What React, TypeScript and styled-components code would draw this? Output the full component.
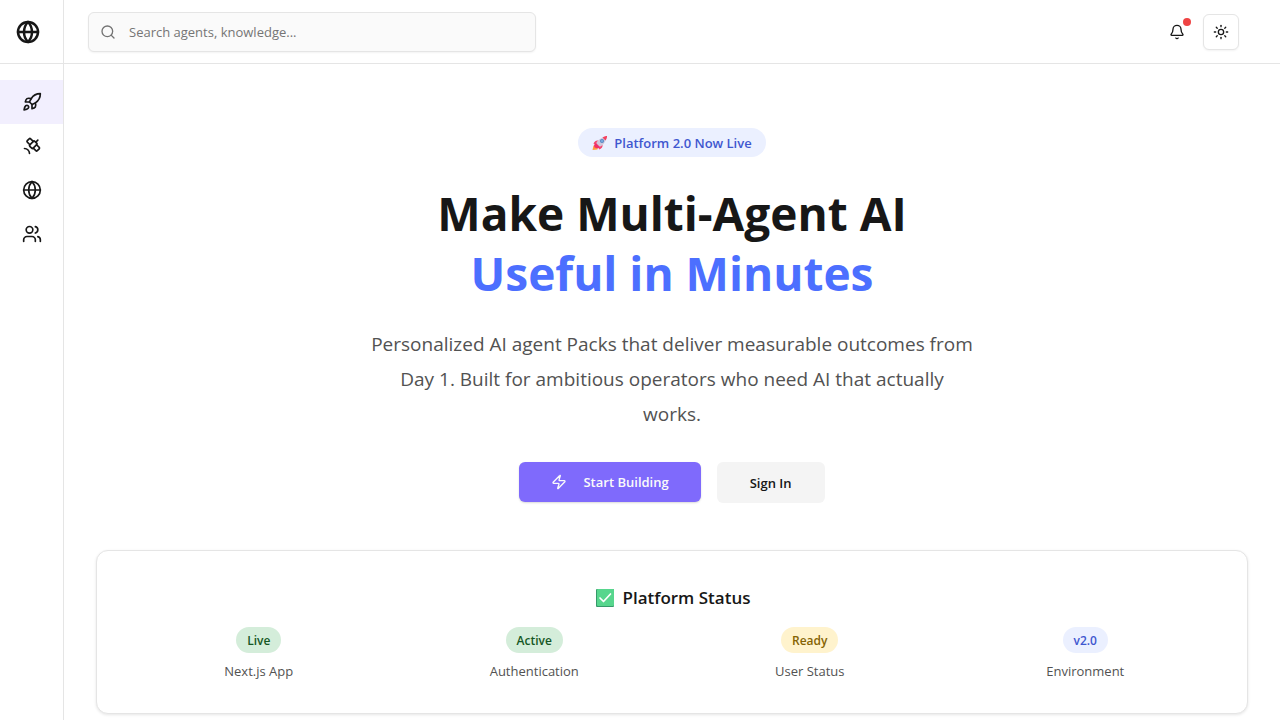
import React from 'react';
import styled, { createGlobalStyle } from 'styled-components';
import { Bell, Globe, Rocket, Satellite, Search, Sun, Users, Zap } from 'lucide-react';

const GlobalStyle = createGlobalStyle`
  *, *::before, *::after { box-sizing: border-box; }
  body {
    margin: 0;
    background: #ffffff;
    color: #171717;
    font-family: "Segoe UI", "Open Sans", "Noto Sans", sans-serif;
    font-size: 14px;
    line-height: 20px;
  }
  h1, h2, p, dl, dd, dt { margin: 0; }
`;

const Shell = styled.div`
  display: grid;
  grid-template-columns: 64px minmax(0, 1fr);
  min-height: 100vh;
`;

const Sidebar = styled.aside`
  border-right: 1px solid #e5e5e5;
`;

const Brand = styled.a`
  display: flex;
  align-items: center;
  height: 64px;
  padding-left: 16px;
  border-bottom: 1px solid #e5e5e5;
  color: inherit;
`;

const Nav = styled.nav`
  display: flex;
  flex-direction: column;
  padding-top: 16px;
`;

const NavLink = styled.a<{ $active?: boolean }>`
  display: flex;
  align-items: center;
  justify-content: center;
  height: 44px;
  color: inherit;
  background: ${(p) => (p.$active ? '#f2effe' : 'transparent')};
`;

const TopBar = styled.header`
  display: flex;
  align-items: center;
  justify-content: space-between;
  height: 64px;
  padding: 0 41px 0 24px;
  border-bottom: 1px solid #e5e5e5;
`;

const SearchBox = styled.label`
  display: flex;
  align-items: center;
  gap: 13px;
  flex: 0 1 448px;
  height: 40px;
  padding: 0 11px;
  border: 1px solid #e5e5e5;
  border-radius: 6px;
  background: #fafafa;
  box-shadow: 0 1px 2px rgba(0, 0, 0, 0.05);
  color: #737373;
`;

const SearchInput = styled.input`
  flex: 1;
  min-width: 0;
  padding: 0;
  border: 0;
  outline: 0;
  background: transparent;
  color: #171717;
  font: inherit;
  font-size: 13px;
  &::placeholder { color: #757575; opacity: 1; }
`;

const Actions = styled.div`
  display: flex;
  align-items: center;
  gap: 8px;
`;

const IconButton = styled.button<{ $outlined?: boolean }>`
  position: relative;
  display: flex;
  align-items: center;
  justify-content: center;
  width: 36px;
  height: 36px;
  padding: 0;
  border: 1px solid ${(p) => (p.$outlined ? '#e5e5e5' : 'transparent')};
  border-radius: 6px;
  background: #ffffff;
  box-shadow: ${(p) => (p.$outlined ? '0 1px 2px rgba(0, 0, 0, 0.05)' : 'none')};
  color: inherit;
`;

const Dot = styled.span`
  position: absolute;
  top: 3px;
  right: 3px;
  width: 8px;
  height: 8px;
  border-radius: 50%;
  background: #ef4444;
`;

const Main = styled.main`
  padding: 64px 32px 6px;
`;

const Hero = styled.section`
  display: flex;
  flex-direction: column;
  align-items: center;
  text-align: center;
`;

const Announcement = styled.div`
  display: flex;
  align-items: center;
  gap: 6px;
  height: 29px;
  padding: 0 14px;
  border-radius: 15px;
  background: #ebf0ff;
  color: #3f57cf;
  font-size: 13px;
  font-weight: 600;
`;

const Title = styled.h1`
  margin-top: 26px;
  font-size: 46px;
  font-weight: 700;
  line-height: 60px;
`;

const Accent = styled.span`
  display: block;
  color: #4c6fff;
`;

const Lead = styled.p`
  max-width: 604px;
  margin-top: 24px;
  color: #525252;
  font-size: 19px;
  line-height: 35px;
`;

const ButtonRow = styled.div`
  display: flex;
  gap: 16px;
  margin-top: 30px;
`;

const Button = styled.button<{ $primary?: boolean }>`
  display: flex;
  align-items: center;
  gap: 16px;
  height: ${(p) => (p.$primary ? '40px' : '41px')};
  padding: 0 ${(p) => (p.$primary ? '32px' : '33px')};
  border: 0;
  border-radius: 6px;
  background: ${(p) => (p.$primary ? '#7f6afc' : '#f4f4f4')};
  box-shadow: ${(p) => (p.$primary ? '0 1px 2px rgba(0, 0, 0, 0.15)' : 'none')};
  color: ${(p) => (p.$primary ? '#fafafa' : '#171717')};
  font: inherit;
  font-size: 13px;
  font-weight: 600;
`;

const StatusCard = styled.section`
  margin-top: 47px;
  padding: 33px 24px 32px;
  border: 1px solid #e5e5e5;
  border-radius: 12px;
  background: #ffffff;
  box-shadow: 0 1px 3px rgba(0, 0, 0, 0.1);
`;

const CardTitle = styled.h2`
  display: flex;
  align-items: center;
  justify-content: center;
  gap: 8px;
  padding-left: 3px;
  font-size: 17px;
  font-weight: 600;
  line-height: 28px;
`;

const StatusGrid = styled.dl`
  display: grid;
  grid-template-columns: repeat(4, minmax(0, 1fr));
  margin-top: 15px;
`;

const StatusItem = styled.div`
  display: flex;
  flex-direction: column-reverse;
  align-items: center;
  gap: 8px;
`;

const StatusLabel = styled.dt`
  color: #525252;
  font-size: 13px;
  line-height: 20px;
`;

const tones = {
  green: { background: '#d4edda', color: '#155724' },
  amber: { background: '#fff3cd', color: '#856404' },
  blue: { background: '#ebf0ff', color: '#3f57cf' },
};

const Pill = styled.dd<{ $tone: keyof typeof tones }>`
  padding: 4px 11px 2px;
  border-radius: 13px;
  background: ${(p) => tones[p.$tone].background};
  color: ${(p) => tones[p.$tone].color};
  font-size: 12px;
  font-weight: 600;
  line-height: 20px;
`;

const RocketEmoji = () => (
  <svg width="16" height="16" viewBox="0 0 32 32" aria-hidden="true">
    <path d="M3 21 L1 30 L11 29 L11 23 Z" fill="#ff9d3c" />
    <path d="M13 11 C8 10 4 13 3 18 L10 19 Z" fill="#f4486f" />
    <path d="M21 19 C22 24 19 28 14 29 L13 22 Z" fill="#f4486f" />
    <path d="M26 4 C18 5 11 10 8 17 L15 24 C22 21 27 14 28 6 Z" fill="#cfc9dc" />
    <path d="M8 16 L16 24 L12 27 L5 25 L4 20 Z" fill="#f02f68" />
    <path d="M21 5 C25 2 28 2 30 2 C30 4 30 7 27 11 Z" fill="#f4405f" />
    <circle cx="20" cy="12" r="4" fill="#5585c4" />
    <circle cx="20" cy="12" r="2" fill="#7fb3e6" />
  </svg>
);

const CheckEmoji = () => (
  <svg width="18" height="18" viewBox="0 0 18 18" aria-hidden="true">
    <rect width="18" height="18" rx="1" fill="#36996a" />
    <rect x="1" width="17" height="17" rx="1" fill="#57d68d" />
    <path d="M4 9 L7.5 12.5 L14.5 5" fill="none" stroke="#ffffff" strokeWidth="1.7" strokeLinecap="round" strokeLinejoin="round" />
  </svg>
);

const navItems = [
  { label: 'Launch', icon: Rocket },
  { label: 'Agents', icon: Satellite },
  { label: 'Explore', icon: Globe },
  { label: 'Team', icon: Users },
];

const statuses: { value: string; label: string; tone: keyof typeof tones }[] = [
  { value: 'Live', label: 'Next.js App', tone: 'green' },
  { value: 'Active', label: 'Authentication', tone: 'green' },
  { value: 'Ready', label: 'User Status', tone: 'amber' },
  { value: 'v2.0', label: 'Environment', tone: 'blue' },
];

export default function App() {
  return (
    <>
      <GlobalStyle />
      <Shell>
        <Sidebar>
          <Brand href="#" aria-label="Home">
            <Globe size={24} strokeWidth={2.5} />
          </Brand>
          <Nav aria-label="Primary">
            {navItems.map(({ label, icon: Icon }, i) => (
              <NavLink key={label} href="#" aria-label={label} $active={i === 0}>
                <Icon size={20} />
              </NavLink>
            ))}
          </Nav>
        </Sidebar>
        <div>
          <TopBar>
            <SearchBox>
              <Search size={16} />
              <SearchInput type="search" aria-label="Search" placeholder="Search agents, knowledge..." />
            </SearchBox>
            <Actions>
              <IconButton type="button" aria-label="Notifications">
                <Bell size={16} />
                <Dot />
              </IconButton>
              <IconButton type="button" aria-label="Toggle theme" $outlined>
                <Sun size={16} />
              </IconButton>
            </Actions>
          </TopBar>
          <Main>
            <Hero>
              <Announcement>
                <RocketEmoji />
                Platform 2.0 Now Live
              </Announcement>
              <Title>
                Make Multi-Agent AI <Accent>Useful in Minutes</Accent>
              </Title>
              <Lead>
                Personalized AI agent Packs that deliver measurable outcomes from Day 1. Built for
                ambitious operators who need AI that actually works.
              </Lead>
              <ButtonRow>
                <Button type="button" $primary>
                  <Zap size={16} />
                  Start Building
                </Button>
                <Button type="button">Sign In</Button>
              </ButtonRow>
            </Hero>
            <StatusCard>
              <CardTitle>
                <CheckEmoji />
                Platform Status
              </CardTitle>
              <StatusGrid>
                {statuses.map((s) => (
                  <StatusItem key={s.label}>
                    <StatusLabel>{s.label}</StatusLabel>
                    <Pill $tone={s.tone}>{s.value}</Pill>
                  </StatusItem>
                ))}
              </StatusGrid>
            </StatusCard>
          </Main>
        </div>
      </Shell>
    </>
  );
}
